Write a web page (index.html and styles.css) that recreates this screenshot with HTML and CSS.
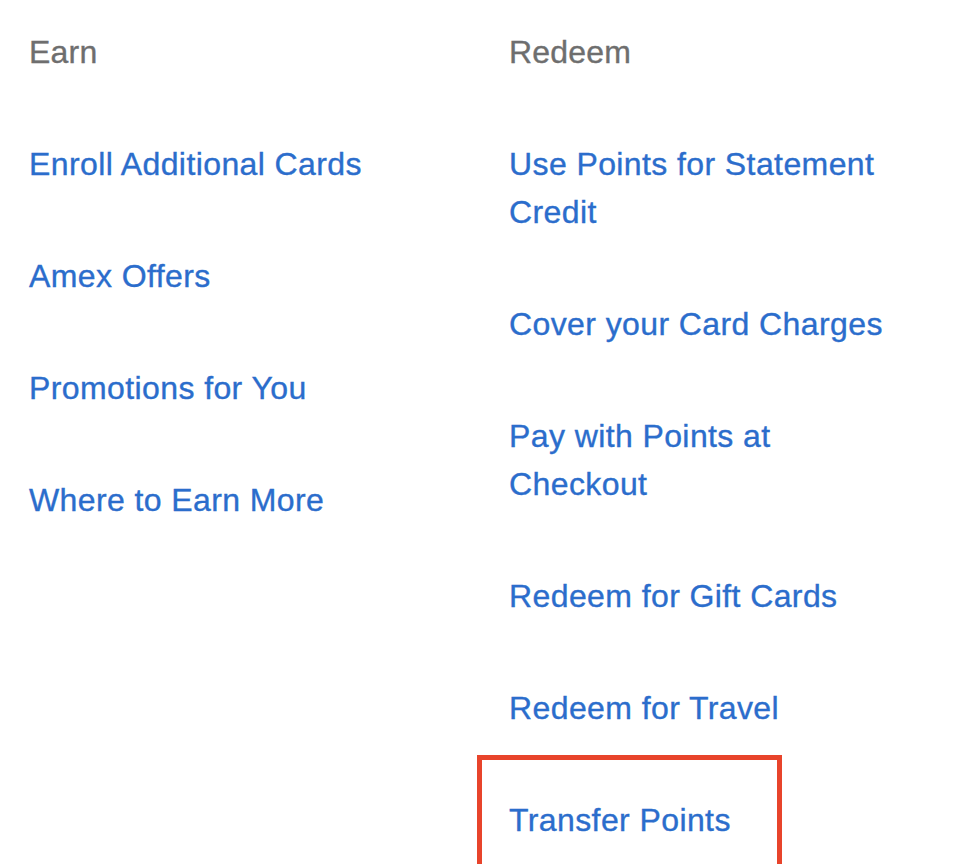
FILE: index.html
```html
<!DOCTYPE html>
<html lang="en">
<head>
<meta charset="utf-8">
<title>Earn and Redeem</title>
<link rel="stylesheet" href="styles.css">
</head>
<body>
<div class="page">
  <div class="col col-earn">
    <div class="heading">Earn</div>
    <ul class="links">
      <li><a href="#">Enroll Additional Cards</a></li>
      <li><a href="#">Amex Offers</a></li>
      <li><a href="#">Promotions for You</a></li>
      <li><a href="#">Where to Earn More</a></li>
    </ul>
  </div>
  <div class="col col-redeem">
    <div class="heading">Redeem</div>
    <ul class="links">
      <li><a href="#">Use Points for Statement Credit</a></li>
      <li><a href="#">Cover your Card Charges</a></li>
      <li><a href="#">Pay with Points at Checkout</a></li>
      <li><a href="#">Redeem for Gift Cards</a></li>
      <li><a href="#">Redeem for Travel</a></li>
      <li class="highlighted"><a href="#">Transfer Points</a></li>
    </ul>
  </div>
</div>
</body>
</html>
```
FILE: styles.css
```css
html, body {
  margin: 0;
  padding: 0;
  background: #ffffff;
  overflow: hidden;
  height: 864px;
}
body {
  font-family: "Liberation Sans", Arial, Helvetica, sans-serif;
  font-size: 32px;
  line-height: 48px;
  letter-spacing: 0.4px;
}
.page {
  display: grid;
  grid-template-columns: 480px 392px;
  padding: 28px 0 0 29px;
}
.heading {
  color: #6e6e6e;
  letter-spacing: 0.2px;
  -webkit-text-stroke: 0.35px #6e6e6e;
}
.links {
  list-style: none;
  margin: 64px 0 0;
  padding: 0;
  display: flex;
  flex-direction: column;
  gap: 64px;
}
.links a {
  color: #2b6dcc;
  text-decoration: none;
  -webkit-text-stroke: 0.35px #2b6dcc;
}
.highlighted {
  position: relative;
}
.highlighted::before {
  content: "";
  position: absolute;
  left: -32px;
  top: -41px;
  width: 305px;
  height: 150px;
  border: 5px solid #e8442b;
  border-bottom: 0;
  box-sizing: border-box;
}
```
